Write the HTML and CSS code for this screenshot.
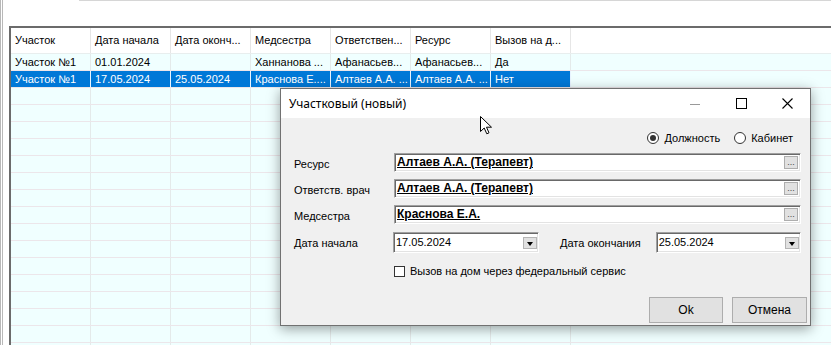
FILE: index.html
```html
<!DOCTYPE html>
<html lang="ru">
<head>
    <meta charset="UTF-8">
    <meta name="viewport" content="width=device-width, initial-scale=1.0">
    <title>Участки</title>
    <link rel="stylesheet" href="styles.css">
</head>
<body>
    <div class="screen">
        <div class="topline"></div>

        <div class="grid">
            <div class="row head">
                <div class="cell">Участок</div>
                <div class="cell">Дата начала</div>
                <div class="cell">Дата оконч...</div>
                <div class="cell">Медсестра</div>
                <div class="cell">Ответствен...</div>
                <div class="cell">Ресурс</div>
                <div class="cell">Вызов на д...</div>
                <div class="fill"></div>
            </div>
            <div class="row">
                <div class="cell">Участок №1</div>
                <div class="cell">01.01.2024</div>
                <div class="cell"></div>
                <div class="cell">Ханнанова ...</div>
                <div class="cell">Афанасьев...</div>
                <div class="cell">Афанасьев...</div>
                <div class="cell">Да</div>
                <div class="fill"></div>
            </div>
            <div class="row selected">
                <div class="cell">Участок №1</div>
                <div class="cell">17.05.2024</div>
                <div class="cell">25.05.2024</div>
                <div class="cell">Краснова Е....</div>
                <div class="cell">Алтаев А.А. ...</div>
                <div class="cell">Алтаев А.А. ...</div>
                <div class="cell">Нет</div>
                <div class="fill"></div>
            </div>
            <div class="empty"></div>
        </div>

        <div class="dialog">
            <div class="titlebar">
                <span class="title">Участковый (новый)</span>
                <div class="winbtns">
                    <span class="wb"><svg width="10" height="10" viewBox="0 0 10 10"><path d="M0 5.5h10" stroke="#999" stroke-width="1"/></svg></span>
                    <span class="wb"><svg width="11" height="11" viewBox="0 0 11 11"><rect x="0.5" y="0.5" width="10" height="10" fill="none" stroke="#000" stroke-width="1"/></svg></span>
                    <span class="wb"><svg width="11" height="11" viewBox="0 0 11 11"><path d="M0.5 0.5l10 10M10.5 0.5l-10 10" stroke="#000" stroke-width="1.1"/></svg></span>
                </div>
            </div>

            <div class="dlg-body">
                <div class="radios">
                    <span class="radio checked"></span><span class="radio-text">Должность</span>
                    <span class="radio"></span><span class="radio-text">Кабинет</span>
                </div>

                <div class="field-row">
                    <span class="label">Ресурс</span>
                    <div class="lookup"><span class="value">Алтаев А.А. (Терапевт)</span><span class="dots">...</span></div>
                </div>
                <div class="field-row">
                    <span class="label">Ответств. врач</span>
                    <div class="lookup"><span class="value">Алтаев А.А. (Терапевт)</span><span class="dots">...</span></div>
                </div>
                <div class="field-row">
                    <span class="label">Медсестра</span>
                    <div class="lookup"><span class="value">Краснова Е.А.</span><span class="dots">...</span></div>
                </div>

                <div class="date-row">
                    <span class="label">Дата начала</span>
                    <div class="datebox start">17.05.2024<span class="drop"></span></div>
                    <span class="label end-label">Дата окончания</span>
                    <div class="datebox">25.05.2024<span class="drop"></span></div>
                </div>

                <div class="check-row">
                    <span class="checkbox"></span>Вызов на дом через федеральный сервис
                </div>

                <div class="buttons">
                    <button class="ok">Ok</button>
                    <button class="cancel">Отмена</button>
                </div>
            </div>
        </div>

        <svg class="cursor" width="13" height="19" viewBox="0 0 13 19">
            <path d="M0.5 0.5V15.5L4.2 12L6.8 17.8L9 16.8L6.5 11.2H11.5Z" fill="#fff" stroke="#000" stroke-width="1" stroke-linejoin="round"/>
        </svg>
    </div>
</body>
</html>
```

FILE: styles.css
```css
* {
    box-sizing: border-box;
}
body {
    margin: 0;
    background: #ffffff;
    font-family: "Liberation Sans", Arial, sans-serif;
    font-size: 11px;
    color: #000000;
}
.screen {
    position: relative;
    width: 831px;
    height: 345px;
    overflow: hidden;
    background: linear-gradient(to right, #b8b8b8 1px, #ffffff 1px 2px, #b8b8b8 2px 3px, #ffffff 3px);
}
.topline {
    margin-left: 79px;
    height: 1px;
    background: #d6d6d6;
}

/* grid */
.grid {
    margin-top: 25px;
    margin-left: 9px;
    height: 320px;
    border-top: 2px solid #6b6b6b;
    border-left: 2px solid #6b6b6b;
    display: flex;
    flex-direction: column;
    background: #f0ffff;
}
.row {
    display: flex;
    height: 17px;
    border-bottom: 1px solid #ece6ea;
}
.row .cell {
    width: 80px;
    flex: none;
    padding-left: 4px;
    line-height: 16px;
    white-space: nowrap;
    overflow: hidden;
    border-right: 1px solid #e4eaea;
}
.row .fill {
    flex: 1;
}
.row.head {
    height: 26px;
    background: #ffffff;
    border-bottom: 1px solid #e8eeee;
}
.row.head .cell {
    line-height: 24px;
    border-right: 1px solid #e6e6e6;
}
.row.selected .cell {
    background: #0078d7;
    color: #ffffff;
    border-right-color: #e8f4ff;
}
.empty {
    flex: 1;
    background:
        repeating-linear-gradient(to bottom, transparent 0 16px, #ece6ea 16px 17px),
        repeating-linear-gradient(to right, transparent 0 79px, #e4eaea 79px 80px) 0 0 / 560px 100% no-repeat;
}

/* dialog window */
.dialog {
    position: absolute;
    left: 280px;
    top: 88px;
    width: 531px;
    height: 238px;
    border: 1px solid #717171;
    background: #f0f0f0;
    box-shadow: 0 3px 12px rgba(0, 0, 0, 0.38);
    display: flex;
    flex-direction: column;
}
.titlebar {
    height: 29px;
    background: #ffffff;
    display: flex;
    align-items: center;
    flex: none;
}
.title {
    padding-left: 8px;
    font-family: "Noto Sans", "Liberation Sans", sans-serif;
    font-size: 12px;
    flex: 1;
}
.winbtns {
    display: flex;
    height: 100%;
}
.wb {
    width: 46px;
    display: flex;
    align-items: center;
    justify-content: center;
}
.dlg-body {
    flex: 1;
    padding: 14px 0 0 13px;
    display: flex;
    flex-direction: column;
}
.radios {
    display: flex;
    align-items: center;
    justify-content: flex-end;
    height: 12px;
    padding-right: 17px;
}
.radio {
    width: 12px;
    height: 12px;
    border: 1px solid #333333;
    border-radius: 50%;
    background: #ffffff;
    display: flex;
    align-items: center;
    justify-content: center;
}
.radio.checked::after {
    content: "";
    width: 6px;
    height: 6px;
    border-radius: 50%;
    background: #333333;
}
.radio-text {
    margin-left: 5px;
    margin-right: 14px;
}
.radio-text:last-child {
    margin-right: 0;
}

.label {
    white-space: nowrap;
}
.field-row {
    display: flex;
    align-items: center;
    margin-top: 9px;
}
.field-row + .field-row {
    margin-top: 7px;
}
.field-row .label {
    width: 100px;
    flex: none;
    padding-top: 2px;
}
.lookup,
.datebox {
    position: relative;
    background: #ffffff;
    border-top: 1px solid #a0a0a0;
    border-left: 1px solid #a0a0a0;
    border-right: 1px solid #ffffff;
    border-bottom: 1px solid #ffffff;
    box-shadow: inset 1px 1px #696969, inset -1px -1px #e3e3e3;
}
.lookup {
    width: 407px;
    height: 19px;
    padding: 1px 0 0 2px;
}
.value {
    font-size: 12px;
    font-weight: bold;
    text-decoration: underline;
    line-height: 14px;
}
.dots {
    position: absolute;
    right: 2px;
    top: 2px;
    width: 14px;
    height: 13px;
    background: #e1e1e1;
    border: 1px solid #adadad;
    font-size: 9px;
    line-height: 10px;
    text-align: center;
    color: #444444;
}

.date-row {
    display: flex;
    align-items: center;
    margin-top: 8px;
    height: 21px;
}
.date-row .label:first-child {
    width: 99px;
}
.datebox {
    height: 21px;
    padding: 2px 0 0 2px;
    line-height: 15px;
}
.datebox.start {
    width: 146px;
}
.datebox:last-child {
    width: 145px;
}
.end-label {
    margin-left: 21px;
    margin-right: 15px;
}
.drop {
    position: absolute;
    right: 1px;
    top: 4px;
    width: 14px;
    height: 12px;
    background: #e1e1e1;
    border: 1px solid #b4b4b4;
}
.drop::after {
    content: "";
    position: absolute;
    left: 3px;
    top: 4px;
    border-left: 3.5px solid transparent;
    border-right: 3.5px solid transparent;
    border-top: 4px solid #000000;
}

.check-row {
    display: flex;
    align-items: center;
    margin-top: 12px;
    margin-left: 100px;
    height: 12px;
}
.checkbox {
    width: 11px;
    height: 11px;
    border: 1px solid #333333;
    background: #ffffff;
    margin-right: 5px;
}

.buttons {
    display: flex;
    justify-content: flex-end;
    gap: 9px;
    margin-top: 20px;
    padding-right: 3px;
}
button {
    height: 26px;
    background: #e1e1e1;
    border: 1px solid #adadad;
    font-family: "Liberation Sans", Arial, sans-serif;
    font-size: 12px;
    color: #000000;
    padding: 0;
}
button.ok {
    width: 74px;
}
button.cancel {
    width: 75px;
}

.cursor {
    position: absolute;
    left: 480px;
    top: 116px;
}
```
